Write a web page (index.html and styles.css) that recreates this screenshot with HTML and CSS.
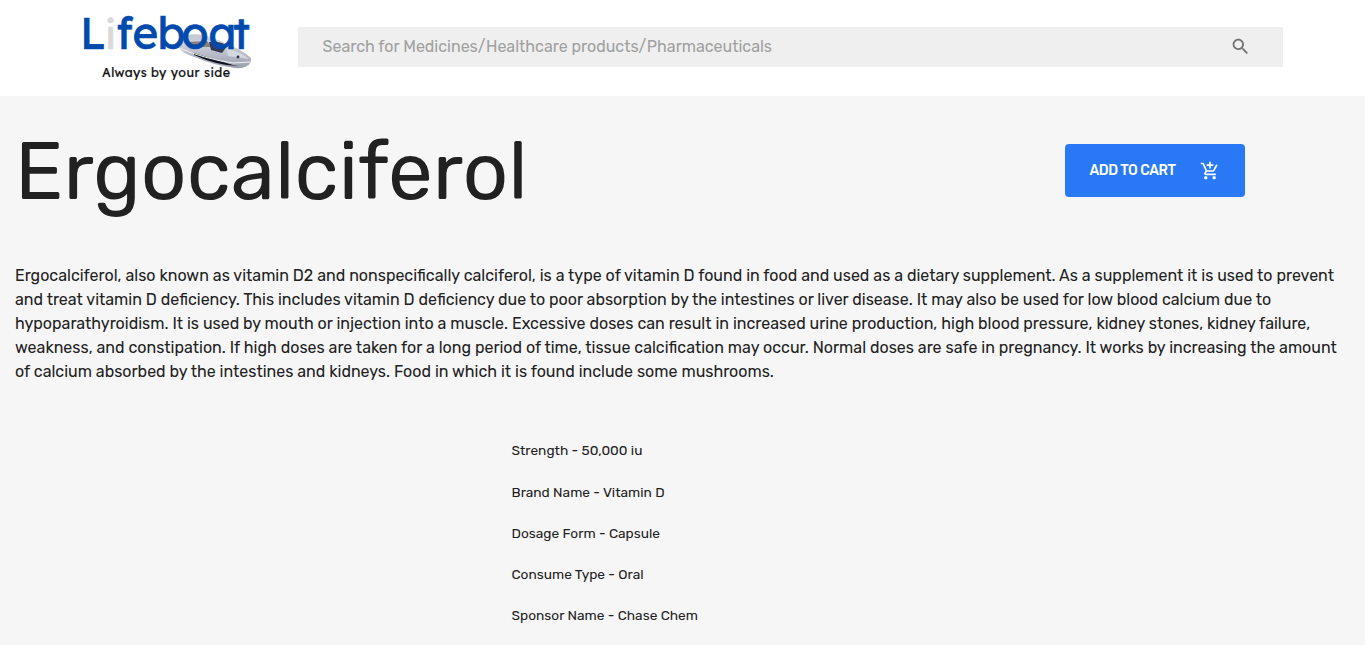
FILE: index.html
```html
<!DOCTYPE html>
<html lang="en">
<head>
<meta charset="utf-8">
<title>Lifeboat - Ergocalciferol</title>
<link rel="stylesheet" href="styles.css">
</head>
<body>
<header class="header">
  <svg class="logo" viewBox="0 0 190 85" width="190" height="85" role="img" aria-label="Lifeboat">
    <defs>
      <linearGradient id="hull" x1="0" y1="0" x2="0" y2="1">
        <stop offset="0" stop-color="#e4e6ec"/>
        <stop offset="1" stop-color="#9a9fae"/>
      </linearGradient>
    </defs>
    <path d="M102 41 L110 36 L109 31 Q120 27 132 31 L146 36 Q166 44 176 53 L176 57 Q172 64 160 63 Q138 60 122 53 Q106 48 102 41 Z" fill="url(#hull)"/>
    <path d="M110 31 Q120 27 133 32 L134 35 L111 36 Z" fill="#c7cad3"/>
    <path d="M110 37 L132 36 L137 42 L120 42 Z" fill="#8b8176"/>
    <path d="M134 37 Q146 36 152 41 L147 48 L136 45 Z" fill="#343b50"/>
    <path d="M119 48 Q141 55 158 60 L164 61 Q143 61 119 50 Z" fill="#10131f"/>
    <path d="M151 43 Q166 47 174 54 L153 51 Z" fill="#d3d7e0"/>
    <path d="M104 43 Q130 54 158 58 L176 57" fill="none" stroke="#f2f3f7" stroke-width="1"/>
    <circle cx="163" cy="52" r="1.4" fill="#2c3040"/>
    <text class="logo-name" y="43.5" x="5 30 41 57.5 82.5 106.5 133.5 158"><tspan>L</tspan><tspan class="logo-i">i</tspan><tspan>feboat</tspan></text>
    <text class="logo-tag" x="27" y="71.5" textLength="128">Always by your side</text>
  </svg>
  <form class="search">
    <input class="search-input" type="text" placeholder="Search for Medicines/Healthcare products/Pharmaceuticals">
    <svg class="search-icon" viewBox="0 0 24 24"><path d="M15.5 14h-.79l-.28-.27C15.41 12.59 16 11.11 16 9.5 16 5.91 13.09 3 9.5 3S3 5.91 3 9.5 5.91 16 9.5 16c1.61 0 3.09-.59 4.23-1.57l.27.28v.79l5 4.99L20.49 19l-4.99-5zm-6 0C7.01 14 5 11.99 5 9.5S7.01 5 9.5 5 14 7.01 14 9.5 11.99 14 9.5 14z"/></svg>
  </form>
</header>
<main class="product">
  <div class="product-head">
    <h1 class="title">Ergocalciferol</h1>
    <button class="cart" type="button">
      <span class="cart-label">ADD TO CART</span>
      <svg class="cart-icon" viewBox="0 0 24 24"><path d="M11 9h2V6h3V4h-3V1h-2v3H8v2h3v3zm-4 9c-1.1 0-1.99.9-1.99 2S5.9 22 7 22s2-.9 2-2-.9-2-2-2zm10 0c-1.1 0-1.99.9-1.99 2s.89 2 1.99 2 2-.9 2-2-.9-2-2-2zm-9.83-3.25l.03-.12.9-1.63h7.45c.75 0 1.41-.41 1.75-1.03l3.86-7.01L19.42 4h-.01l-1.1 2-2.76 5H8.53l-.13-.27L6.16 6l-.95-2-.94-2H1v2h2l3.6 7.59-1.35 2.45c-.16.28-.25.61-.25.96 0 1.1.9 2 2 2h12v-2H7.42c-.13 0-.25-.11-.25-.25z"/></svg>
    </button>
  </div>
  <p class="description">Ergocalciferol, also known as vitamin D2 and nonspecifically calciferol, is a type of vitamin D found in food and used as a dietary supplement. As a supplement it is used to prevent and treat vitamin D deficiency. This includes vitamin D deficiency due to poor absorption by the intestines or liver disease. It may also be used for low blood calcium due to hypoparathyroidism. It is used by mouth or injection into a muscle. Excessive doses can result in increased urine production, high blood pressure, kidney stones, kidney failure, weakness, and constipation. If high doses are taken for a long period of time, tissue calcification may occur. Normal doses are safe in pregnancy. It works by increasing the amount of calcium absorbed by the intestines and kidneys. Food in which it is found include some mushrooms.</p>
  <ul class="details">
    <li>Strength - 50,000 iu</li>
    <li>Brand Name - Vitamin D</li>
    <li>Dosage Form - Capsule</li>
    <li>Consume Type - Oral</li>
    <li>Sponsor Name - Chase Chem</li>
  </ul>
</main>
</body>
</html>
```
FILE: styles.css
```css
* { box-sizing: border-box; }
body {
  margin: 0;
  height: 645px;
  overflow: hidden;
  background: #f6f6f6;
  color: #212121;
  font-family: Rubik, Roboto, sans-serif;
}
.header {
  display: flex;
  align-items: flex-start;
  height: 96px;
  padding: 5px 82px 0 75px;
  background: #fff;
}
.logo { flex: none; }
.logo-name { font: 400 44px Lexend, Outfit, Quicksand, Poppins, Urbanist, Lato, sans-serif; fill: #004aad; stroke: #004aad; stroke-width: .6; }
.logo-i { font-size: 40px; fill: #d9d9d9; stroke: #d9d9d9; }
.logo-tag { font: 400 12.5px Lexend, Outfit, Quicksand, Lato, sans-serif; fill: #111; stroke: #111; stroke-width: .2; }
.search {
  display: flex;
  align-items: center;
  flex: 1;
  height: 40px;
  margin: 22px 0 0 33px;
  padding: 0 32.5px 0 24.5px;
  background: #efefef;
}
.search-input {
  flex: 1;
  height: 24px;
  margin-bottom: 1px;
  padding: 0;
  border: 0;
  outline: 0;
  background: none;
  font: 400 16px Rubik, Roboto, sans-serif;
}
.search-input::placeholder { color: #a0a0a0; opacity: 1; }
.search-icon { width: 21px; height: 21px; margin-bottom: 1px; fill: #717171; }
.product { padding: 0 15px; }
.product-head {
  display: flex;
  justify-content: space-between;
  align-items: flex-start;
  height: 168px;
  padding: 32px 105px 0 0;
}
.title {
  margin: 0;
  font-size: 80px;
  line-height: 88px;
  font-weight: 400;
}
.cart {
  display: flex;
  align-items: center;
  justify-content: space-between;
  width: 180px;
  height: 53px;
  margin-top: 16px;
  padding: 0 25px 0 24.5px;
  border: 0;
  border-radius: 4px;
  background: #2979f6;
  color: #fff;
  font: 500 14px Rubik, Roboto, sans-serif;
  letter-spacing: -.4px;
}
.cart-icon { width: 20px; height: 20px; fill: #fff; }
.description { margin: 0; font-size: 16px; line-height: 24px; }
.details {
  margin: 46.4px 0 0 496.5px;
  padding: 0;
  list-style: none;
  font-size: 13.7px;
  line-height: 41.25px;
}
.details li { height: 41.25px; }
```
